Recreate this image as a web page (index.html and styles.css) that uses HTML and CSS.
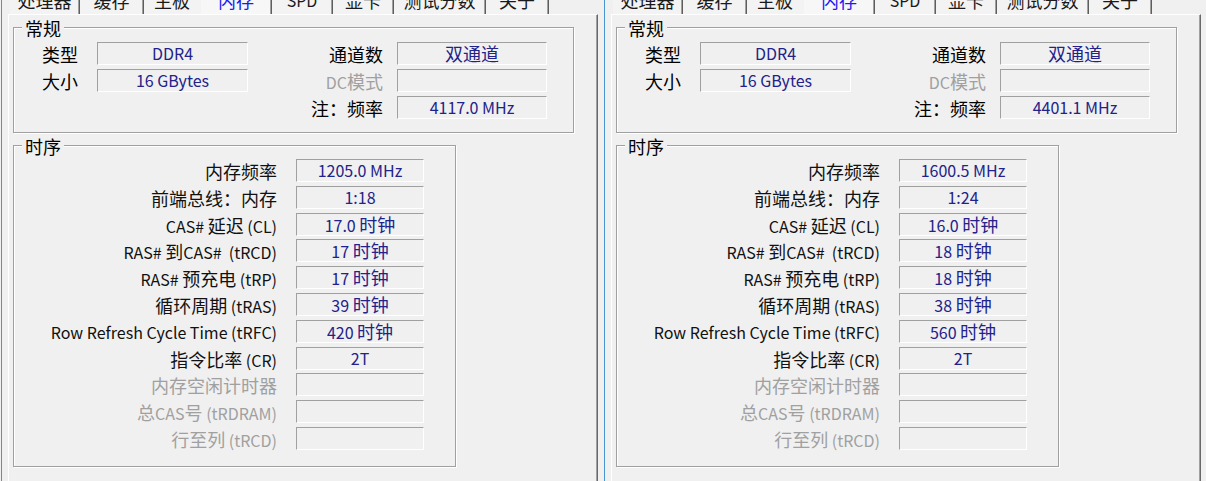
FILE: index.html
```html
<!DOCTYPE html>
<html lang="zh-CN">
<head>
<meta charset="utf-8">
<title>CPU-Z 内存</title>
<link rel="stylesheet" href="styles.css">
</head>
<body>
<div class="screen">
  <div class="window">
    <div class="tabs">
      <div class="tab w1">处理器</div>
      <div class="tab w2">缓存</div>
      <div class="tab w3">主板</div>
      <div class="tab w4 active">内存</div>
      <div class="tab w5 latin">SPD</div>
      <div class="tab w6">显卡</div>
      <div class="tab w7">测试分数</div>
      <div class="tab w8">关于</div>
    </div>
    <div class="panel">
      <div class="group general">
        <div class="legend">常规</div>
        <div class="rows grows">
          <div class="grow"><span class="glab"><span class="c">类型</span></span><span class="box gbox">DDR4</span><span class="glab2"><span class="c">通道数</span></span><span class="box gbox2"><span class="c">双通道</span></span></div>
          <div class="grow"><span class="glab"><span class="c">大小</span></span><span class="box gbox">16 GBytes</span><span class="glab2 dis">DC<span class="c">模式</span></span><span class="box gbox2"></span></div>
          <div class="grow"><span class="glab"></span><span class="gspace"></span><span class="glab2"><span class="c">注：频率</span></span><span class="box gbox2">4117.0 MHz</span></div>
        </div>
      </div>
      <div class="group timing">
        <div class="legend">时序</div>
        <div class="rows trows">
          <div class="trow"><span class="tlab"><span class="c">内存频率</span></span><span class="box tbox">1205.0 MHz</span></div>
          <div class="trow"><span class="tlab"><span class="c">前端总线：内存</span></span><span class="box tbox">1:18</span></div>
          <div class="trow"><span class="tlab">CAS# <span class="c">延迟</span> (CL)</span><span class="box tbox">17.0 <span class="c">时钟</span></span></div>
          <div class="trow"><span class="tlab">RAS# <span class="c">到</span>CAS#&nbsp; (tRCD)</span><span class="box tbox">17 <span class="c">时钟</span></span></div>
          <div class="trow"><span class="tlab">RAS# <span class="c">预充电</span> (tRP)</span><span class="box tbox">17 <span class="c">时钟</span></span></div>
          <div class="trow"><span class="tlab"><span class="c">循环周期</span> (tRAS)</span><span class="box tbox">39 <span class="c">时钟</span></span></div>
          <div class="trow"><span class="tlab">Row Refresh Cycle Time (tRFC)</span><span class="box tbox">420 <span class="c">时钟</span></span></div>
          <div class="trow"><span class="tlab"><span class="c">指令比率</span> (CR)</span><span class="box tbox">2T</span></div>
          <div class="trow"><span class="tlab dis"><span class="c">内存空闲计时器</span></span><span class="box tbox"></span></div>
          <div class="trow"><span class="tlab dis"><span class="c">总</span>CAS<span class="c">号</span> (tRDRAM)</span><span class="box tbox"></span></div>
          <div class="trow"><span class="tlab dis"><span class="c">行至列</span> (tRCD)</span><span class="box tbox"></span></div>
        </div>
      </div>
    </div>
  </div>

  <div class="window">
    <div class="tabs">
      <div class="tab w1">处理器</div>
      <div class="tab w2">缓存</div>
      <div class="tab w3">主板</div>
      <div class="tab w4 active">内存</div>
      <div class="tab w5 latin">SPD</div>
      <div class="tab w6">显卡</div>
      <div class="tab w7">测试分数</div>
      <div class="tab w8">关于</div>
    </div>
    <div class="panel">
      <div class="group general">
        <div class="legend">常规</div>
        <div class="rows grows">
          <div class="grow"><span class="glab"><span class="c">类型</span></span><span class="box gbox">DDR4</span><span class="glab2"><span class="c">通道数</span></span><span class="box gbox2"><span class="c">双通道</span></span></div>
          <div class="grow"><span class="glab"><span class="c">大小</span></span><span class="box gbox">16 GBytes</span><span class="glab2 dis">DC<span class="c">模式</span></span><span class="box gbox2"></span></div>
          <div class="grow"><span class="glab"></span><span class="gspace"></span><span class="glab2"><span class="c">注：频率</span></span><span class="box gbox2">4401.1 MHz</span></div>
        </div>
      </div>
      <div class="group timing">
        <div class="legend">时序</div>
        <div class="rows trows">
          <div class="trow"><span class="tlab"><span class="c">内存频率</span></span><span class="box tbox">1600.5 MHz</span></div>
          <div class="trow"><span class="tlab"><span class="c">前端总线：内存</span></span><span class="box tbox">1:24</span></div>
          <div class="trow"><span class="tlab">CAS# <span class="c">延迟</span> (CL)</span><span class="box tbox">16.0 <span class="c">时钟</span></span></div>
          <div class="trow"><span class="tlab">RAS# <span class="c">到</span>CAS#&nbsp; (tRCD)</span><span class="box tbox">18 <span class="c">时钟</span></span></div>
          <div class="trow"><span class="tlab">RAS# <span class="c">预充电</span> (tRP)</span><span class="box tbox">18 <span class="c">时钟</span></span></div>
          <div class="trow"><span class="tlab"><span class="c">循环周期</span> (tRAS)</span><span class="box tbox">38 <span class="c">时钟</span></span></div>
          <div class="trow"><span class="tlab">Row Refresh Cycle Time (tRFC)</span><span class="box tbox">560 <span class="c">时钟</span></span></div>
          <div class="trow"><span class="tlab"><span class="c">指令比率</span> (CR)</span><span class="box tbox">2T</span></div>
          <div class="trow"><span class="tlab dis"><span class="c">内存空闲计时器</span></span><span class="box tbox"></span></div>
          <div class="trow"><span class="tlab dis"><span class="c">总</span>CAS<span class="c">号</span> (tRDRAM)</span><span class="box tbox"></span></div>
          <div class="trow"><span class="tlab dis"><span class="c">行至列</span> (tRCD)</span><span class="box tbox"></span></div>
        </div>
      </div>
    </div>
  </div>
</div>
</body>
</html>
```

FILE: styles.css
```css
html, body {
  margin: 0;
  padding: 0;
  height: 481px;
  overflow: hidden;
  background: #f0f0f0;
}

body {
  font-family: "Noto Sans CJK SC", sans-serif;
  font-size: 16px;
  color: #1a1a1a;
}

.c { font-size: 18px; }

.screen {
  display: flex;
  height: 481px;
  padding-left: 1px;
}

.window {
  flex: 0 0 603px;
  box-sizing: border-box;
  border-left: 1px solid #4a94cf;
  display: flex;
  flex-direction: column;
  height: 481px;
  background: #f0f0f0;
}

/* ---------- tabs ---------- */
.tabs {
  display: flex;
  height: 23px;
  margin-top: -9px;
  margin-left: 8px;
  flex: 0 0 auto;
}

.tab {
  box-sizing: border-box;
  height: 23px;
  font-size: 18px;
  line-height: 18px;
  text-align: center;
  color: #1a1a1a;
  background: #f3f3f3;
  border-right: 1px solid #5e5e5e;
  box-shadow: inset -1px 0 0 #a0a0a0;
}

.tab.latin { font-size: 16px; }

.tab.active {
  color: #1c1cf0;
  background: #f7f7f7;
}

.w1 { width: 70px; }
.w2 { width: 64px; }
.w3 { width: 57px; border-right-color: transparent; box-shadow: none; }
.w4 { width: 71px; }
.w5 { width: 61px; }
.w6 { width: 61px; }
.w7 { width: 92px; }
.w8 { width: 63px; }

/* ---------- panel ---------- */
.panel {
  flex: 1 1 auto;
  box-sizing: border-box;
  width: 590px;
  margin-left: 6px;
  border-top: 1px solid #ffffff;
  border-left: 1px solid #ffffff;
  border-right: 1px solid #696969;
  box-shadow: inset -1px 0 0 #a0a0a0;
  padding-top: 12px;
  padding-left: 4px;
}

/* ---------- group boxes ---------- */
.group {
  box-sizing: border-box;
  border: 1px solid #a0a0a0;
  box-shadow: inset 1px 1px 0 #ffffff, 1px 1px 0 #ffffff;
  display: flex;
  flex-direction: column;
}

.legend {
  align-self: flex-start;
  margin: -9px 0 5px 8px;
  padding: 0 3px;
  font-size: 18px;
  line-height: 18px;
  background: #f0f0f0;
  color: #000;
}

.general {
  width: 561px;
  height: 106px;
}

.timing {
  width: 443px;
  height: 322px;
  margin-top: 12px;
}

.timing .legend { margin-bottom: 4px; }

.rows {
  display: flex;
  flex-direction: column;
}

.grows { gap: 4px; padding-left: 28px; }
.trows { gap: 3.8px; }

.box {
  box-sizing: border-box;
  height: 23px;
  border-top: 1px solid #a0a0a0;
  border-left: 1px solid #a0a0a0;
  border-bottom: 1px solid #ffffff;
  border-right: 1px solid #ffffff;
  text-align: center;
  line-height: 21px;
  color: #22228a;
  white-space: nowrap;
  overflow: hidden;
}

.grow, .trow {
  display: flex;
  height: 23px;
}

.glab {
  width: 55px;
  padding-top: 2px;
  line-height: 21px;
  color: #000;
}

.gbox { width: 151px; }
.gspace { width: 151px; }

.glab2 {
  box-sizing: border-box;
  width: 149px;
  padding-right: 14px;
  padding-top: 2px;
  line-height: 21px;
  text-align: right;
  color: #000;
}

.gbox2 { width: 150px; }

.tlab {
  width: 263px;
  margin-right: 19px;
  padding-top: 2px;
  line-height: 21px;
  text-align: right;
  white-space: nowrap;
  color: #111;
}

.tbox { width: 128px; }

.tlab.dis, .glab2.dis { color: #a0a0a0; }
```
